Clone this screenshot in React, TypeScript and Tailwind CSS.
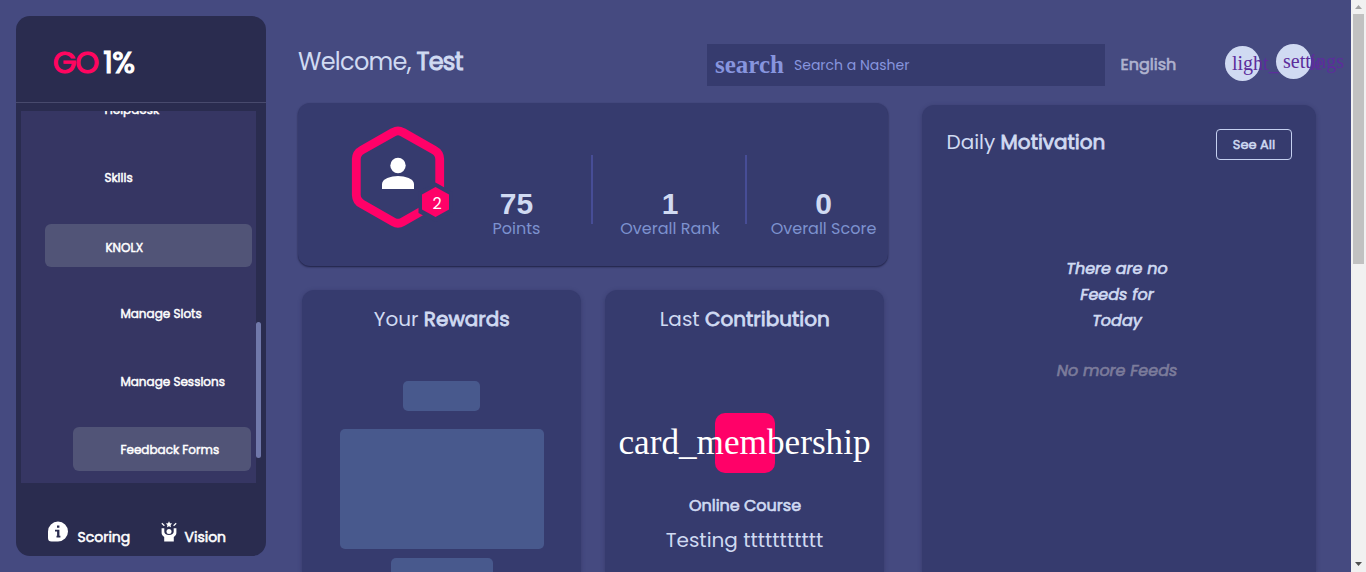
import React from "react";

const sans = "font-['Poppins','Inter',sans-serif]";
const serif = "font-['Liberation_Serif',serif]";
const heavy = "font-normal [-webkit-text-stroke:0.04em_currentColor]";
const card = "bg-[#363b6e] shadow-[0_1px_4px_rgba(30,32,70,0.35)]";

function Sidebar() {
  return (
    <aside className="flex h-[540px] w-[250px] shrink-0 flex-col rounded-[14px] bg-[#2a2c4f] text-white">
      <div className={`flex h-[87px] items-center border-b border-[#484a6d] pt-2 pl-[37px] text-[30px] leading-none ${heavy}`}>
        <span className="tracking-[-0.8px] text-[#ff0560]">GO</span>
        <span className="ml-[5px] tracking-[-0.8px]">1%</span>
      </div>
      <div className="mt-2 flex">
        <nav className={`ml-[5px] flex h-[372px] w-[235px] flex-col overflow-hidden bg-[#363663] text-[12px] ${heavy}`}>
          <div className="-mt-[23px] flex h-full flex-col">
            <div className="flex h-11 shrink-0 items-center pl-[83.4px]">Helpdesk</div>
            <div className="mt-6 flex h-11 shrink-0 items-center pl-[83.4px]">Skills</div>
            <div className="mt-6 ml-6 flex h-[43px] w-[207px] shrink-0 items-center rounded-md bg-[#515477] pt-[5px] pl-[60.4px]">KNOLX</div>
            <div className="mt-[25px] flex h-11 shrink-0 items-center pl-[99.4px]">Manage Slots</div>
            <div className="mt-6 flex h-11 shrink-0 items-center pl-[99.4px]">Manage Sessions</div>
            <div className="mt-[23px] ml-[52px] flex h-11 w-[178px] shrink-0 items-center rounded-md bg-[#515477] pt-px pl-[47.4px]">Feedback Forms</div>
          </div>
        </nav>
        <div className="mt-[211px] h-[136px] w-[5px] rounded-full bg-[#7078aa]" />
      </div>
      <div className="flex flex-1 items-start pt-[38px] pl-8 text-[14px]">
        <svg width="20" height="21" viewBox="0 0 20 21">
          <path d="M10 .5a10 10 0 0 1 0 20H3.5A3.5 3.5 0 0 1 0 17V10.500A10 10 0 0 1 10 .5Z" fill="#fff" />
          <path d="M9 4.600h2.400v2.200H9zM7 8.700h4.400v6h1v1.800H8.500v-1.800h.6v-4.200H7z" fill="#2a2c4f" />
        </svg>
        <span className={`mt-[6px] ml-[9.5px] w-[83.5px] ${heavy}`}>Scoring</span>
        <svg width="16" height="21" viewBox="0 0 16 21">
          <path d="M8 .3l1 1.900 2.200.3-1.600 1.500.4 2.200-2-1-2 1 .4-2.200L4.800 2.500 7 2.200z" fill="#fff" />
          <path d="M.8 2.200l2.600 2.500M15.200 2.200l-2.600 2.500" stroke="#fff" strokeWidth="1.200" />
          <circle cx="8" cy="10.400" r="2.500" fill="#fff" />
          <path d="M.6 7.200h2.700v3.300c0 2 1.800 3.600 4.700 3.600s4.700-1.600 4.700-3.600V7.200h2.700v4.300c0 2-.8 3.300-2.600 4.600v4.300H3.200v-4.300C1.400 14.800.6 13.500.6 11.500z" fill="#fff" />
        </svg>
        <span className={`mt-[6px] ml-[7.5px] ${heavy}`}>Vision</span>
      </div>
    </aside>
  );
}

function TopBar() {
  return (
    <header className="flex h-[70px] items-start text-[#d0daf2]">
      <h1 className="mt-[30px] w-[409px] text-[24px] leading-8 tracking-[-0.72px]">
        Welcome, <b className={heavy}>Test</b>
      </h1>
      <div className="mt-7 flex h-[42px] w-[398px] items-center bg-[#363b6e] pl-2 text-[#8795de]">
        <span className={`${serif} -mt-px text-[25px] leading-none font-bold`}>search</span>
        <span className="ml-[10px] text-[14px]">Search a Nasher</span>
      </div>
      <span className={`mt-[35px] ml-[15.500px] w-[104.500px] text-[16px] leading-7 text-[#b0b3cf] ${heavy}`}>English</span>
      <div className={`mt-[30px] flex h-[35px] w-[35px] items-center rounded-full bg-[#d0daf2] pb-[2px] pl-[7px] text-[20px] whitespace-nowrap text-[#5c2d9c] ${serif}`}>light_mode</div>
      <div className={`relative mt-7 ml-4 flex h-[35px] w-[35px] items-center rounded-full bg-[#d0daf2] pb-[2px] pl-[7px] text-[20px] whitespace-nowrap text-[#5c2d9c] ${serif}`}>settings</div>
    </header>
  );
}

function Stat({ value, label, className }: { value: string; label: string; className: string }) {
  return (
    <div className={`flex flex-col items-center pt-[34px] whitespace-nowrap ${className}`}>
      <span className="font-['Liberation_Sans',sans-serif] text-[30px] leading-[30px] font-bold text-[#d0daf2]">{value}</span>
      <span className="-mt-[2px] text-[16px] leading-6 text-[#7d92cf]">{label}</span>
    </div>
  );
}

function StatsCard() {
  return (
    <section className="flex h-[163px] w-[590px] rounded-xl bg-[#363b6e] shadow-[0_1px_2px_rgba(25,27,60,0.9)]">
      <svg className="mt-[19px] ml-[47px] shrink-0" width="110" height="110" viewBox="0 0 110 110">
        <path d="M48.500 10.200Q53 7.500 57.500 10.200L89 28Q94.500 31 94.700 37V73Q94.500 79 89 82L57.500 100Q53 102.500 48.500 100L17 82Q11.500 79 11.300 73V37Q11.500 31 17 28Z" fill="none" stroke="#ff0168" strokeWidth="8.800" />
        <path d="M90.500 60.500l17 9.500v20l-17 10-17-9V70z" fill="#363b6e" />
        <path d="M90.500 65l13.500 7.500v15l-13.500 7.500L77 87.500V72.500z" fill="#ff0168" />
        <circle cx="53" cy="43.500" r="7.700" fill="#fff" />
        <path d="M37 67v-5c0-5.300 9-8 16-8s16 2.700 16 8v5z" fill="#fff" />
        <text x="92" y="86.500" textAnchor="middle" fontSize="16" fill="#fff" fontFamily="Poppins, Inter, sans-serif">2</text>
      </svg>
      <div className="mt-[52px] -ml-[17px] flex h-[69px]">
        <Stat value="75" label="Points" className="w-[153px] pl-[4px]" />
        <div className="w-[2px] bg-[#474d96]" />
        <Stat value="1" label="Overall Rank" className="w-[152px] pl-[2px]" />
        <div className="w-[2px] bg-[#474d96]" />
        <Stat value="0" label="Overall Score" className="w-[153px]" />
      </div>
    </section>
  );
}

function Rewards() {
  return (
    <section className={`flex w-[279px] flex-col items-center rounded-t-xl pt-[13px] ${card}`}>
      <h2 className="pl-[0.5px] text-[20px] leading-8 text-[#d0daf2]">
        Your <b className={heavy}>Rewards</b>
      </h2>
      <div className="mt-[46px] h-[30px] w-[77px] shrink-0 rounded-[5px] bg-[#48598d]" />
      <div className="mt-[18px] h-[120px] w-[204px] shrink-0 rounded-[5px] bg-[#48598d]" />
      <div className="mt-[9px] h-[30px] w-[102px] shrink-0 rounded-[5px] bg-[#48598d]" />
    </section>
  );
}

function Contribution() {
  return (
    <section className={`flex w-[279px] flex-col items-center rounded-t-xl pt-[13px] text-[#d0daf2] ${card}`}>
      <h2 className="pl-[0.5px] text-[20px] leading-8">
        Last <b className={heavy}>Contribution</b>
      </h2>
      <div className={`mt-[78px] flex h-[60px] w-[60px] items-center justify-center rounded-[10px] bg-[#ff0168] text-[35.2px] leading-none text-white ${serif}`}>
        card_membership
      </div>
      <p className={`mt-[21px] pl-px text-[16px] leading-6 ${heavy}`}>Online Course</p>
      <p className="mt-[7px] text-[20px] leading-[30px]">Testing ttttttttttt</p>
    </section>
  );
}

function Motivation() {
  return (
    <section className={`mt-[19px] ml-[34px] flex h-[467px] w-[394px] flex-col rounded-t-xl text-[#d0daf2] ${card}`}>
      <div className="flex justify-between pt-6 pr-6 pl-6">
        <h2 className="-mt-[3px] pl-[0.5px] text-[20px] leading-8">
          Daily <b className={heavy}>Motivation</b>
        </h2>
        <button className={`h-[31px] w-[76px] rounded border border-[#c5d0f0] text-[13px] ${heavy}`}>See All</button>
      </div>
      <div className={`mt-24 flex flex-col items-center pr-1 text-[16px] leading-[26px] italic ${heavy}`}>
        <p>There are no</p>
        <p>Feeds for</p>
        <p>Today</p>
        <p className="mt-6 text-[#7c7c9b]">No more Feeds</p>
      </div>
    </section>
  );
}

function PageScrollbar() {
  return (
    <div className="flex h-full w-[15px] shrink-0 flex-col items-center bg-[#f1f1f1]">
      <svg width="15" height="14" viewBox="0 0 15 14"><path d="M4 9h7L7.500 5z" fill="#a3a3a3" /></svg>
      <div className="h-[250px] w-[11px] bg-[#c1c1c1]" />
      <svg className="mt-auto" width="15" height="15" viewBox="0 0 15 15"><path d="M4 5h7l-3.500 4z" fill="#505050" /></svg>
    </div>
  );
}

export default function App() {
  return (
    <div className={`flex h-[572px] w-[1366px] overflow-hidden bg-[#454a80] ${sans}`}>
      <div className="flex min-w-0 flex-1 pt-4 pl-4">
        <Sidebar />
        <main className="ml-8 flex min-w-0 flex-1 flex-col">
          <TopBar />
          <div className="flex">
            <div className="mt-[17px] w-[590px]">
              <StatsCard />
              <div className="mt-6 ml-1 flex h-[282px] gap-6">
                <Rewards />
                <Contribution />
              </div>
            </div>
            <Motivation />
          </div>
        </main>
      </div>
      <PageScrollbar />
    </div>
  );
}
